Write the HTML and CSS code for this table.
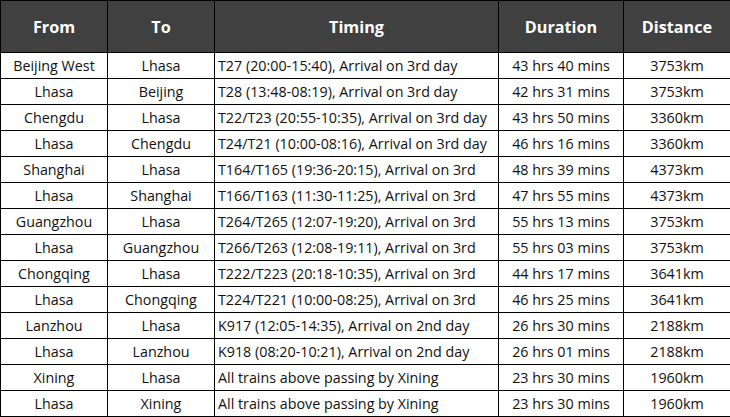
FILE: index.html
```
<!DOCTYPE html>
<html>
<head>
<meta charset="utf-8">
<link rel="stylesheet" href="styles.css">
</head>
<body>
<table class="trains">
<colgroup>
<col class="c-from"><col class="c-to"><col class="c-timing"><col class="c-dur"><col class="c-dist">
</colgroup>
<thead>
<tr><th>From</th><th>To</th><th>Timing</th><th>Duration</th><th>Distance</th></tr>
</thead>
<tbody>
<tr><td>Beijing West</td><td>Lhasa</td><td class="timing">T27 (20:00-15:40), Arrival on 3rd day</td><td>43 hrs 40 mins</td><td>3753km</td></tr>
<tr><td>Lhasa</td><td>Beijing</td><td class="timing">T28 (13:48-08:19), Arrival on 3rd day</td><td>42 hrs 31 mins</td><td>3753km</td></tr>
<tr><td>Chengdu</td><td>Lhasa</td><td class="timing">T22/T23 (20:55-10:35), Arrival on 3rd day</td><td>43 hrs 50 mins</td><td>3360km</td></tr>
<tr><td>Lhasa</td><td>Chengdu</td><td class="timing">T24/T21 (10:00-08:16), Arrival on 3rd day</td><td>46 hrs 16 mins</td><td>3360km</td></tr>
<tr><td>Shanghai</td><td>Lhasa</td><td class="timing">T164/T165 (19:36-20:15), Arrival on 3rd</td><td>48 hrs 39 mins</td><td>4373km</td></tr>
<tr><td>Lhasa</td><td>Shanghai</td><td class="timing">T166/T163 (11:30-11:25), Arrival on 3rd</td><td>47 hrs 55 mins</td><td>4373km</td></tr>
<tr><td>Guangzhou</td><td>Lhasa</td><td class="timing">T264/T265 (12:07-19:20), Arrival on 3rd</td><td>55 hrs 13 mins</td><td>3753km</td></tr>
<tr><td>Lhasa</td><td>Guangzhou</td><td class="timing">T266/T263 (12:08-19:11), Arrival on 3rd</td><td>55 hrs 03 mins</td><td>3753km</td></tr>
<tr><td>Chongqing</td><td>Lhasa</td><td class="timing">T222/T223 (20:18-10:35), Arrival on 3rd</td><td>44 hrs 17 mins</td><td>3641km</td></tr>
<tr><td>Lhasa</td><td>Chongqing</td><td class="timing">T224/T221 (10:00-08:25), Arrival on 3rd</td><td>46 hrs 25 mins</td><td>3641km</td></tr>
<tr><td>Lanzhou</td><td>Lhasa</td><td class="timing">K917 (12:05-14:35), Arrival on 2nd day</td><td>26 hrs 30 mins</td><td>2188km</td></tr>
<tr><td>Lhasa</td><td>Lanzhou</td><td class="timing">K918 (08:20-10:21), Arrival on 2nd day</td><td>26 hrs 01 mins</td><td>2188km</td></tr>
<tr><td>Xining</td><td>Lhasa</td><td class="timing">All trains above passing by Xining</td><td>23 hrs 30 mins</td><td>1960km</td></tr>
<tr><td>Lhasa</td><td>Xining</td><td class="timing">All trains above passing by Xining</td><td>23 hrs 30 mins</td><td>1960km</td></tr>
</tbody>
</table>
</body>
</html>
```
FILE: styles.css
```
html, body {
  margin: 0;
  padding: 0;
  background: #ffffff;
}
.trains {
  border-collapse: collapse;
  table-layout: fixed;
  width: 730px;
  font-family: "Open Sans", "DejaVu Sans", sans-serif;
  font-size: 14.3px;
  color: #111111;
}
.c-from { width: 107px; }
.c-to { width: 107px; }
.c-timing { width: 284px; }
.c-dur { width: 125px; }
.c-dist { width: 107px; }
.trains th, .trains td {
  border: 1px solid #000;
  padding: 0;
  text-align: center;
  white-space: nowrap;
  overflow: hidden;
}
.trains th {
  background: #404040;
  color: #ffffff;
  font-weight: 700;
  font-size: 16.2px;
  height: 51px;
}
.trains td {
  height: 25px;
  line-height: 20px;
}
.trains td.timing {
  text-align: left;
  padding-left: 3px;
}
```
